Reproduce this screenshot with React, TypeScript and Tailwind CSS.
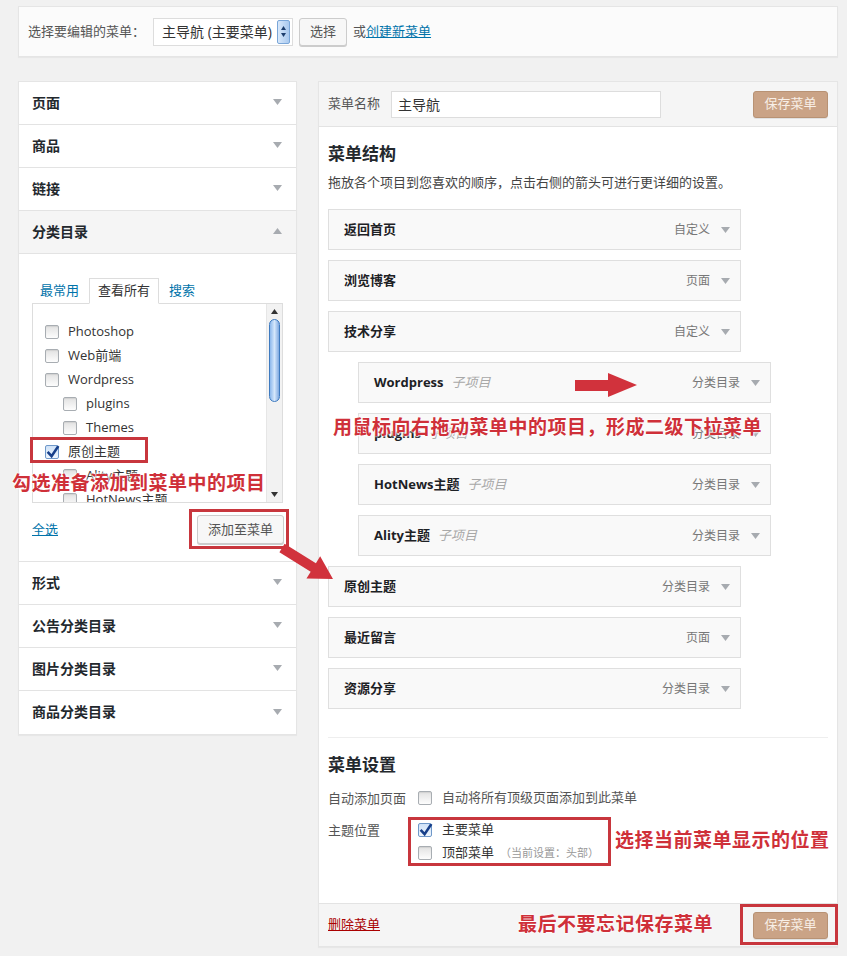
import type { ReactNode } from "react";

const FONT = "font-['Open_Sans','Noto_Sans_CJK_SC',sans-serif]";
const NOTE = "text-[19px] leading-[24px] font-bold text-[#cf3039] tracking-[0.5px] whitespace-nowrap [text-shadow:0_0_2px_#fff,0_0_2px_#fff,0_0_3px_#fff]";

// small grey triangle used by accordion headers and menu items
function Caret({ up = false }: { up?: boolean }) {
  return (
    <svg width="9" height="6" viewBox="0 0 9 6" className="shrink-0">
      {up ? <polygon points="0,6 9,6 4.5,0" fill="#a7abb0" /> : <polygon points="0,0 9,0 4.5,6" fill="#a7abb0" />}
    </svg>
  );
}

function Check({ checked = false }: { checked?: boolean }) {
  if (checked) {
    return (
      <span className="relative inline-block w-[14px] h-[14px] shrink-0 rounded-[2px] border border-[#6f98c9] bg-gradient-to-b from-[#cfe2f7] to-[#eef5fd]">
        <svg width="14" height="14" viewBox="0 0 14 14" className="block">
          <path d="M2.5 6.8 L5.6 10.2 L11.6 1.2" stroke="#173f8a" strokeWidth="2.6" fill="none" strokeLinecap="square" />
        </svg>
      </span>
    );
  }
  return (
    <span className="inline-block w-[14px] h-[14px] shrink-0 rounded-[2px] border border-[#a8adb2] bg-gradient-to-b from-[#e2e2e2] to-[#fdfdfd] shadow-[inset_0_1px_1px_rgba(0,0,0,0.08)]" />
  );
}

const SECTIONS_TOP = ["页面", "商品", "链接"];
const SECTIONS_BOTTOM = ["形式", "公告分类目录", "图片分类目录", "商品分类目录"];

const CATEGORIES = [
  { name: "Photoshop", level: 0 },
  { name: "Web前端", level: 0 },
  { name: "Wordpress", level: 0 },
  { name: "plugins", level: 1 },
  { name: "Themes", level: 1 },
  { name: "原创主题", level: 0, checked: true },
  { name: "Ality主题", level: 1 },
  { name: "HotNews主题", level: 1 },
];

const MENU_ITEMS = [
  { title: "返回首页", type: "自定义" },
  { title: "浏览博客", type: "页面" },
  { title: "技术分享", type: "自定义" },
  { title: "Wordpress", type: "分类目录", sub: true },
  { title: "plugins", type: "分类目录", sub: true },
  { title: "HotNews主题", type: "分类目录", sub: true },
  { title: "Ality主题", type: "分类目录", sub: true },
  { title: "原创主题", type: "分类目录" },
  { title: "最近留言", type: "页面" },
  { title: "资源分享", type: "分类目录" },
];

function SectionHeader({ label, open = false, last = false }: { label: string; open?: boolean; last?: boolean }) {
  return (
    <div
      className={`h-[43px] flex items-center justify-between pl-[13px] pr-[14px] pb-[2px] ${
        last ? "" : "border-b border-[#e3e3e3]"
      } ${open ? "bg-[#f5f5f5]" : "bg-white"}`}
    >
      <span className="text-[14px] font-bold text-[#23282d]">{label}</span>
      <Caret up={open} />
    </div>
  );
}

function SaveButton() {
  return (
    <button className="w-[75px] h-[27px] rounded-[3px] bg-[#caa386] border border-[#b89274] text-[13px] text-[#f8efe7] shadow-[0_1px_0_rgba(0,0,0,0.08)]">
      保存菜单
    </button>
  );
}

function Scrollbar() {
  return (
    <div className="w-[16px] shrink-0 flex flex-col bg-[#f2f2f2] border-l border-[#e6e6e6]">
      <div className="h-[15px] flex items-center justify-center">
        <svg width="7" height="5" viewBox="0 0 7 5">
          <polygon points="0,5 7,5 3.5,0" fill="#333" />
        </svg>
      </div>
      <div className="h-[83px] mx-[2px] rounded-[6px] border border-[#3f7bc0] bg-gradient-to-r from-[#8db8ec] via-[#d5e7fb] to-[#7ea8e0]" />
      <div className="flex-1" />
      <div className="h-[15px] flex items-center justify-center">
        <svg width="7" height="5" viewBox="0 0 7 5">
          <polygon points="0,0 7,0 3.5,5" fill="#333" />
        </svg>
      </div>
    </div>
  );
}

function CategoryBox() {
  return (
    <div className="px-[13px] pt-[24px] pb-[17px] border-b border-[#e3e3e3]">
      <div className="h-[26px] flex items-end text-[13px]">
        <span className="h-[26px] px-[8px] flex items-center text-[#0073aa]">最常用</span>
        <span className="relative z-10 ml-[2px] h-[26px] px-[8px] flex items-center bg-white border border-[#dddddd] border-b-white text-[#333]">
          查看所有
        </span>
        <span className="ml-[2px] h-[26px] px-[8px] flex items-center text-[#0073aa]">搜索</span>
      </div>
      <div className="-mt-px h-[200px] border border-[#dddddd] flex overflow-hidden">
        <div className="flex-1 pt-[16px] pl-[12px]">
          {CATEGORIES.map((c) => (
            <div key={c.name} className={`h-[24px] flex items-center gap-[9px] ${c.level ? "pl-[18px]" : ""}`}>
              <Check checked={c.checked} />
              <span className="text-[13px] text-[#333]">{c.name}</span>
            </div>
          ))}
        </div>
        <Scrollbar />
      </div>
      <div className="mt-[12px] h-[29px] flex items-center justify-between">
        <a className="text-[13px] text-[#0073aa] underline">全选</a>
        <button className="mr-[-1px] w-[87px] h-[29px] rounded-[3px] border border-[#cccccc] bg-[#f7f7f7] text-[13px] text-[#555] shadow-[0_1px_0_#ccc]">
          添加至菜单
        </button>
      </div>
    </div>
  );
}

function MenuItem({ title, type, sub }: { title: string; type: string; sub?: boolean }) {
  return (
    <div
      className={`w-[413px] h-[41px] shrink-0 flex items-center justify-between pl-[15px] pr-[10px] border border-[#dfdfdf] bg-[#f9f9f9] ${
        sub ? "ml-[30px]" : ""
      }`}
    >
      <div className="flex items-baseline gap-[8px]">
        <span className="text-[13px] font-bold text-[#1d2125]">{title}</span>
        {sub && <span className="text-[13px] italic text-[#a8a8a8]">子项目</span>}
      </div>
      <div className="flex items-center gap-[11px]">
        <span className="text-[12px] text-[#777]">{type}</span>
        <Caret />
      </div>
    </div>
  );
}

function SettingRow({ label, children }: { label: string; children: ReactNode }) {
  return (
    <div className="flex text-[13px] text-[#555]">
      <span className="w-[90px] shrink-0 leading-[20px]">{label}</span>
      <div className="flex flex-col gap-[3px]">{children}</div>
    </div>
  );
}

function Annotations() {
  return (
    <>
      {/* red frames */}
      <div className="absolute left-[30px] top-[437px] w-[118px] h-[26px] border-[3px] border-[#c8363d]" />
      <div className="absolute left-[189px] top-[509px] w-[100px] h-[40px] border-[3px] border-[#c8363d]" />
      <div className="absolute left-[408px] top-[817px] w-[203px] h-[49px] border-[3px] border-[#c8363d]" />
      <div className="absolute left-[740px] top-[904px] w-[98px] h-[41px] border-[3px] border-[#c8363d]" />

      {/* arrows */}
      <svg className="absolute left-[575px] top-[373px]" width="62" height="24" viewBox="0 0 62 24">
        <polygon points="0,7 33,7 33,0 62,12 33,24 33,18 0,18" fill="#d1323c" />
      </svg>
      <svg className="absolute left-[278px] top-[542px]" width="58" height="42" viewBox="0 0 58 42">
        <polygon
          points="6.6,1.75 37.9,21.15 42.15,14.35 55,37 28.45,36.45 32.7,29.65 1.4,10.25"
          fill="#d1323c"
        />
      </svg>

      {/* notes */}
      <div className={`absolute left-[333px] top-[415px] ${NOTE}`}>用鼠标向右拖动菜单中的项目，形成二级下拉菜单</div>
      <div className={`absolute left-[12px] top-[471px] ${NOTE}`}>勾选准备添加到菜单中的项目</div>
      <div className={`absolute left-[615px] top-[828px] ${NOTE}`}>选择当前菜单显示的位置</div>
      <div className={`absolute left-[518px] top-[912px] ${NOTE}`}>最后不要忘记保存菜单</div>
    </>
  );
}

export default function App() {
  return (
    <div className={`relative w-[847px] h-[956px] overflow-hidden bg-[#f1f1f1] pt-[6px] pl-[18px] ${FONT}`}>
      {/* menu picker */}
      <div className="w-[820px] h-[51px] flex items-center pl-[9px] bg-[#fbfbfb] border border-[#e5e5e5] shadow-[0_1px_1px_rgba(0,0,0,0.04)] text-[13px] text-[#555]">
        <span>选择要编辑的菜单：</span>
        <div className="ml-[8px] w-[140px] h-[28px] flex items-center justify-between pl-[8px] pr-[2px] bg-white border border-[#dddddd]">
          <span className="text-[14px] text-[#333]">主导航 (主要菜单)</span>
          <span className="w-[13px] h-[24px] flex flex-col items-center justify-center gap-[3px] rounded-[2px] border border-[#7aa6d8] bg-gradient-to-r from-[#d8e8fa] to-[#a9c9ef]">
            <svg width="5" height="4" viewBox="0 0 5 4">
              <polygon points="0,4 5,4 2.5,0" fill="#1d3e6e" />
            </svg>
            <svg width="5" height="4" viewBox="0 0 5 4">
              <polygon points="0,0 5,0 2.5,4" fill="#1d3e6e" />
            </svg>
          </span>
        </div>
        <button className="ml-[6px] w-[48px] h-[28px] rounded-[3px] border border-[#cccccc] bg-[#f7f7f7] text-[13px] text-[#555] shadow-[0_1px_0_#ccc]">
          选择
        </button>
        <span className="ml-[6px]">或</span>
        <a className="text-[#0073aa] underline">创建新菜单</a>
      </div>

      <div className="mt-[24px] flex items-start gap-[21px]">
        {/* left: items to add */}
        <div className="w-[279px] bg-white border border-[#e5e5e5] shadow-[0_1px_1px_rgba(0,0,0,0.04)]">
          {SECTIONS_TOP.map((s) => (
            <SectionHeader key={s} label={s} />
          ))}
          <SectionHeader label="分类目录" open />
          <CategoryBox />
          {SECTIONS_BOTTOM.map((s, i) => (
            <SectionHeader key={s} label={s} last={i === SECTIONS_BOTTOM.length - 1} />
          ))}
        </div>

        {/* right: menu structure */}
        <div className="w-[520px] bg-white border border-[#e5e5e5] shadow-[0_1px_1px_rgba(0,0,0,0.04)]">
          <div className="h-[45px] flex items-center pl-[9px] pr-[9px] bg-[#f5f5f5] border-b border-[#e3e3e3]">
            <span className="text-[13px] text-[#555]">菜单名称</span>
            <div className="ml-[11px] w-[270px] h-[27px] flex items-center pl-[6px] bg-white border border-[#dddddd] text-[14px] text-[#333]">
              主导航
            </div>
            <div className="ml-auto">
              <SaveButton />
            </div>
          </div>

          <div className="h-[776px] px-[9px] pt-[17px]">
            <h3 className="text-[17px] leading-[20px] font-bold text-[#23282d]">菜单结构</h3>
            <p className="mt-[8px] text-[13px] leading-[20px] text-[#444]">
              拖放各个项目到您喜欢的顺序，点击右侧的箭头可进行更详细的设置。
            </p>
            <div className="mt-[17px] flex flex-col gap-[10px]">
              {MENU_ITEMS.map((m) => (
                <MenuItem key={m.title} {...m} />
              ))}
            </div>

            <div className="mt-[28px] h-px bg-[#eeeeee]" />

            <h3 className="mt-[17px] text-[17px] leading-[20px] font-bold text-[#23282d]">菜单设置</h3>
            <div className="mt-[13px]">
              <SettingRow label="自动添加页面">
                <div className="h-[20px] flex items-center gap-[10px]">
                  <Check />
                  <span>自动将所有顶级页面添加到此菜单</span>
                </div>
              </SettingRow>
            </div>
            <div className="mt-[12px]">
              <SettingRow label="主题位置">
                <div className="h-[20px] flex items-center gap-[10px]">
                  <Check checked />
                  <span className="text-[#333]">主要菜单</span>
                </div>
                <div className="h-[20px] flex items-center gap-[10px]">
                  <Check />
                  <span className="text-[#333]">顶部菜单</span>
                  <span className="-ml-[4px] text-[11px] text-[#999]">（当前设置：头部）</span>
                </div>
              </SettingRow>
            </div>
          </div>

          <div className="h-[43px] flex items-center justify-between pl-[9px] pr-[9px] bg-[#f5f5f5] border-t border-[#e3e3e3]">
            <a className="text-[13px] text-[#aa0000] underline">删除菜单</a>
            <SaveButton />
          </div>
        </div>
      </div>

      <Annotations />
    </div>
  );
}
